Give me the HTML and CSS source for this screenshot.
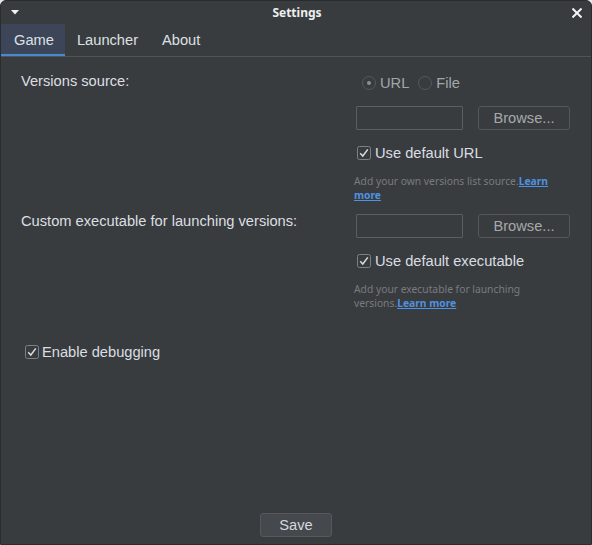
FILE: index.html
```html
<!DOCTYPE html>
<html>
<head>
<meta charset="utf-8">
<link rel="stylesheet" href="styles.css">
</head>
<body>
<div class="window">
  <div class="titlebar">
    <svg class="menu-arrow" width="8" height="5" viewBox="0 0 8 5"><polygon points="0,0 8,0 4,4.5" fill="#f2f2f2"/></svg>
    <span class="title">Settings</span>
    <svg class="close" width="10" height="10" viewBox="0 0 10 10"><path d="M1.2 1.2 L8.8 8.8 M8.8 1.2 L1.2 8.8" stroke="#f4f4f4" stroke-width="2" stroke-linecap="square"/></svg>
  </div>
  <div class="tabs">
    <div class="tab active">Game</div>
    <div class="tab">Launcher</div>
    <div class="tab">About</div>
  </div>
  <div class="content">
    <div class="section">
      <div class="label">Versions source:</div>
      <div class="controls">
        <div class="radios">
          <span class="radio checked"></span><span class="radio-label">URL</span>
          <span class="radio"></span><span class="radio-label">File</span>
        </div>
        <div class="input-row">
          <div class="textbox"></div>
          <div class="button disabled">Browse...</div>
        </div>
        <div class="check-row">
          <svg class="checkbox" width="14" height="14" viewBox="0 0 14 14"><rect x="0.5" y="0.5" width="13" height="13" rx="2" fill="none" stroke="#7d8084"/><polyline points="3.2,7.2 5.8,10 10.8,3.4" fill="none" stroke="#dcdcdc" stroke-width="1.5"/></svg>
          <span class="check-label">Use default URL</span>
        </div>
        <p class="hint">Add your own versions list source.<a class="link">Learn more</a></p>
      </div>
    </div>
    <div class="section second">
      <div class="label">Custom executable for launching versions:</div>
      <div class="controls">
        <div class="input-row">
          <div class="textbox"></div>
          <div class="button disabled">Browse...</div>
        </div>
        <div class="check-row">
          <svg class="checkbox" width="14" height="14" viewBox="0 0 14 14"><rect x="0.5" y="0.5" width="13" height="13" rx="2" fill="none" stroke="#7d8084"/><polyline points="3.2,7.2 5.8,10 10.8,3.4" fill="none" stroke="#dcdcdc" stroke-width="1.5"/></svg>
          <span class="check-label">Use default executable</span>
        </div>
        <p class="hint">Add your executable for launching versions.<a class="link">Learn more</a></p>
      </div>
    </div>
    <div class="check-row debug">
      <svg class="checkbox" width="14" height="14" viewBox="0 0 14 14"><rect x="0.5" y="0.5" width="13" height="13" rx="2" fill="none" stroke="#7d8084"/><polyline points="3.2,7.2 5.8,10 10.8,3.4" fill="none" stroke="#dcdcdc" stroke-width="1.5"/></svg>
      <span class="check-label">Enable debugging</span>
    </div>
  </div>
  <div class="footer">
    <div class="button save">Save</div>
  </div>
</div>
</body>
</html>
```

FILE: styles.css
```css
* { box-sizing: border-box; }
html, body {
  margin: 0;
  padding: 0;
  background: #e8e8e8;
}
.window {
  width: 592px;
  height: 545px;
  background: #393c3f;
  border: 1px solid #2a2c2e;
  border-radius: 6px 6px 0 0;
  display: flex;
  flex-direction: column;
  font-family: "Liberation Sans", Arial, sans-serif;
  font-size: 14.67px;
  color: #d9dde0;
  overflow: hidden;
}
.titlebar {
  height: 23px;
  display: flex;
  align-items: center;
  justify-content: space-between;
  padding: 0 9px 0 10px;
}
.title {
  font-family: "Noto Sans", "Open Sans", sans-serif;
  font-weight: bold;
  font-size: 12px;
  color: #eeeeee;
  margin-left: 3px;
}
.close { margin-top: 1px; }
.tabs {
  height: 33px;
  display: flex;
  border-bottom: 1px solid #505357;
}
.tab {
  padding: 0 12px;
  display: flex;
  align-items: center;
  color: #dce0e4;
  height: 32px;
}
.tab.active {
  background: #3c4658;
  border-bottom: 2px solid #4a88d0;
  padding: 2px 11px 0 13px;
}
.content {
  flex: 1;
  padding: 15px 21px 0 20px;
}
.section {
  display: grid;
  grid-template-columns: 1fr 214px;
  align-items: start;
}
.section.second { margin-top: 10px; }
.section.second .controls { padding-top: 2px; }
.label {
  line-height: 18px;
  color: #dcdfe2;
}
.controls {
  display: flex;
  flex-direction: column;
}
.radios {
  height: 21px;
  display: flex;
  align-items: center;
  padding-left: 6px;
}
.radio {
  width: 14px;
  height: 14px;
  border-radius: 50%;
  border: 1px solid #55595c;
  display: flex;
  align-items: center;
  justify-content: center;
  margin-right: 4px;
}
.radio.checked::after {
  content: "";
  width: 4px;
  height: 4px;
  border-radius: 50%;
  background: #8c8f92;
}
.radio-label {
  color: #a3a6a9;
  margin-right: 9px;
  line-height: 18px;
}
.input-row {
  display: flex;
  justify-content: space-between;
  margin-top: 13px;
}
.section.second .input-row { margin-top: 0; }
.textbox {
  width: 107px;
  height: 24px;
  border: 1px solid #5b5e62;
  border-radius: 1px;
  background: #393c3f;
}
.button {
  height: 24px;
  border: 1px solid #54575b;
  border-radius: 3px;
  display: flex;
  align-items: center;
  justify-content: center;
}
.button.disabled {
  width: 92px;
  color: #a6a9ac;
}
.check-row {
  display: flex;
  align-items: center;
  height: 20px;
  margin-top: 13px;
}
.controls .check-row { padding-left: 1px; }
.checkbox { flex: none; margin-right: 4px; }
.check-label {
  color: #dadee2;
  line-height: 18px;
}
.hint {
  margin: 11px 0 0 -2px;
  font-family: "Noto Sans", "Open Sans", sans-serif;
  font-size: 10.3px;
  line-height: 14px;
  color: #787b7f;
}
.link {
  color: #4f92e0;
  font-weight: bold;
  text-decoration: underline;
}
.check-row.debug {
  margin-top: 32px;
  padding-left: 4px;
}
.check-row.debug .checkbox { margin-right: 3px; }
.footer {
  display: flex;
  justify-content: center;
  padding-bottom: 7px;
}
.button.save {
  width: 72px;
  background: #45484c;
  border-color: #55585c;
  color: #d4d8dc;
}
```
